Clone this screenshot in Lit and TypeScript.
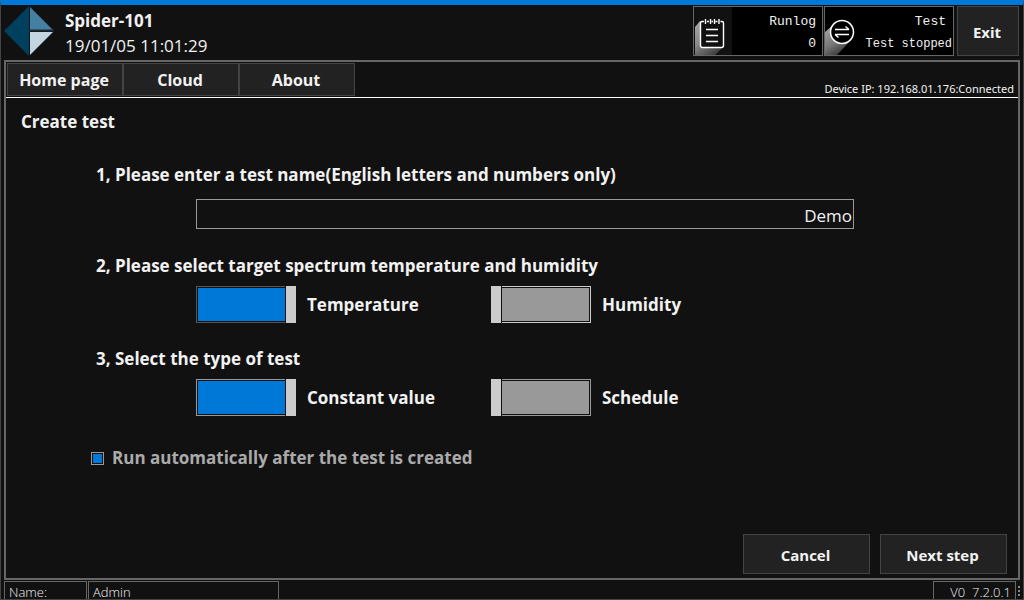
import { LitElement, html, css } from "lit";
import { customElement, property, state } from "lit/decorators.js";

@customElement("toggle-switch")
class ToggleSwitch extends LitElement {
  @property() label = "";
  @property() tone = "mid";
  @property({ type: Boolean }) on = false;

  static styles = css`
    :host {
      display: block;
    }
    .row {
      display: flex;
      align-items: center;
      gap: 11px;
      font-size: 17px;
      line-height: 24px;
      font-weight: 700;
    }
    .switch {
      appearance: none;
      position: relative;
      box-sizing: border-box;
      flex: none;
      width: 100px;
      height: 37px;
      margin: 0;
      padding: 1px;
      border: 1px solid #999;
      background: #999 content-box;
    }
    .dim {
      border-color: #555;
    }
    .bright {
      border-color: #ccc;
    }
    .switch:checked {
      background-color: #0078d7;
    }
    .switch::after {
      content: "";
      position: absolute;
      top: -1px;
      bottom: -1px;
      left: -1px;
      width: 10px;
      background: #ccc;
      box-shadow: 0 0 0 1px #111;
      clip-path: inset(0 -1px);
    }
    .switch:checked::after {
      left: auto;
      right: -1px;
    }
  `;

  render() {
    return html`<label class="row">
      <input
        class="switch ${this.tone}"
        type="checkbox"
        role="switch"
        .checked=${this.on}
        @change=${(e: Event) => (this.on = (e.target as HTMLInputElement).checked)}
      />
      <span>${this.label}</span>
    </label>`;
  }
}

@customElement("app-root")
class AppRoot extends LitElement {
  @state() private testName = "Demo";

  static styles = css`
    :host {
      display: flex;
      flex-direction: column;
      box-sizing: border-box;
      min-height: 100vh;
      border: 1px solid #444;
      border-top: 5px solid #0078d7;
      background: #111;
      color: #f2f2f2;
      font-family: "Open Sans", "Noto Sans", sans-serif;
    }
    .header {
      display: flex;
      justify-content: space-between;
      padding: 1px 4px 2px 3px;
    }
    .brand {
      display: flex;
      gap: 11px;
    }
    .brand-text {
      padding-top: 2px;
    }
    .logo {
      width: 50px;
      height: 50px;
    }
    .device {
      margin: 0;
      font-size: 17px;
      line-height: 25px;
      font-weight: 700;
    }
    .clock {
      display: block;
      font-size: 17px;
      line-height: 25px;
    }
    .tools {
      display: flex;
    }
    .panel {
      display: flex;
      box-sizing: border-box;
      width: 130px;
      height: 50px;
      margin: 0 1px 0 0;
      padding: 0;
      border: 1px solid #666;
      background: #000;
      color: #f2f2f2;
      font-family: "Liberation Mono", monospace;
      text-align: right;
    }
    .panel-icon {
      flex: none;
      width: 38px;
      height: 48px;
    }
    .panel-text {
      flex: 1;
      padding: 4px 6px 0 0;
      font-size: 13px;
      line-height: 22px;
    }
    .panel-text.tight {
      padding: 4px 1px 0 0;
      font-size: 12px;
    }
    .panel-text span {
      display: block;
      white-space: nowrap;
    }
    .panel-text .name {
      font-size: 13px;
    }
    .tight .name {
      padding-right: 6px;
    }
    .btn {
      box-sizing: border-box;
      border: 1px solid #444;
      background: #222;
      color: #f2f2f2;
      font-family: inherit;
      font-size: 15px;
      line-height: 20px;
      font-weight: 700;
      padding: 2px 2px 0 0;
    }
    .exit {
      width: 62px;
      height: 50px;
      margin-left: 2px;
    }
    .frame {
      display: flex;
      flex: 1;
      flex-direction: column;
      margin: 0 3px;
      border: 2px solid #666;
    }
    .bar {
      display: flex;
      justify-content: space-between;
      align-items: flex-end;
      padding: 1px 0 1px 1px;
      border-bottom: 1px solid #fff;
    }
    .tabs {
      display: flex;
    }
    .tab {
      display: block;
      box-sizing: border-box;
      width: 116px;
      padding: 2px 2px 0 0;
      border: 1px solid #444;
      background: #222;
      color: #f2f2f2;
      font-size: 16px;
      line-height: 29px;
      font-weight: 700;
      text-align: center;
      text-decoration: none;
    }
    .ip {
      padding-right: 4px;
      font-family: "Noto Sans", sans-serif;
      font-size: 11px;
      line-height: 14px;
    }
    .form {
      display: flex;
      flex: 1;
      flex-direction: column;
      padding: 12px 11px 4px 15px;
    }
    .title,
    .step {
      margin: 0;
      font-size: 17px;
      line-height: 24px;
      font-weight: 700;
    }
    .title {
      margin-bottom: 29px;
    }
    .step {
      display: block;
      margin-left: 75px;
    }
    .name-box {
      box-sizing: border-box;
      height: 30px;
      margin: 12px 153px 25px 175px;
      padding: 2px 1px 0;
      border: 1px solid #999;
      border-radius: 0;
      background: #111;
      color: #f2f2f2;
      font-family: inherit;
      font-size: 17px;
      text-align: right;
    }
    .group {
      margin: 0;
      padding: 0;
      border: 0;
      min-width: 0;
    }
    .step.legend {
      padding: 0;
    }
    .switches {
      display: grid;
      grid-template-columns: 295px 1fr;
      padding: 8px 0 24px 175px;
    }
    .auto {
      display: flex;
      align-items: center;
      align-self: flex-start;
      gap: 8px;
      margin: 6px 0 0 70px;
      color: #aaa;
      font-size: 17px;
      line-height: 24px;
      font-weight: 700;
    }
    .tick {
      appearance: none;
      box-sizing: border-box;
      width: 13px;
      height: 13px;
      margin: 0;
      padding: 1px;
      border: 1px solid #999;
    }
    .tick:checked {
      background: #0078d7 content-box;
    }
    .actions {
      display: flex;
      justify-content: flex-end;
      gap: 10px;
      margin-top: auto;
    }
    .action {
      width: 127px;
      height: 40px;
    }
    .status {
      display: flex;
      gap: 1px;
      padding: 1px 2px 0 3px;
      font-family: "Open Sans", sans-serif;
      font-size: 13px;
      font-weight: 300;
    }
    .cell {
      box-sizing: border-box;
      border: 1px solid #666;
      border-bottom: 0;
      padding: 1px 4px 0;
      height: 18px;
      line-height: 18px;
      white-space: pre;
    }
    .who {
      width: 83px;
    }
    .user {
      width: 191px;
    }
    .version {
      width: 83px;
      margin-left: auto;
      text-align: right;
    }
    .grip {
      width: 4px;
      height: 18px;
    }
  `;

  render() {
    return html`
      <header class="header">
        <div class="brand">
          <svg class="logo" viewBox="0 0 50 50" aria-hidden="true">
            <path d="M25 0V50L0 25Z" fill="#00405f" />
            <path d="M26 1L49 24H26Z" fill="#4580a3" />
            <path d="M26 26H49L26 49Z" fill="#c3d5e1" />
            <path d="M25 24.5H50" stroke="#1d2a33" stroke-width="2" />
          </svg>
          <div class="brand-text">
            <h1 class="device">Spider-101</h1>
            <time class="clock">19/01/05 11:01:29</time>
          </div>
        </div>
        <div class="tools">
          <button class="panel" type="button">
            <svg class="panel-icon" viewBox="0 0 38 48" aria-hidden="true">
              <defs>
                <linearGradient id="g1" x1="0" y1="0" x2="0.6" y2="1">
                  <stop offset="0" stop-color="#aaa" />
                  <stop offset="0.55" stop-color="#888" />
                  <stop offset="1" stop-color="#444" />
                </linearGradient>
              </defs>
              <rect width="38" height="48" fill="#111" />
              <path d="M6 14L1 20V48H21L29 40Z" fill="url(#g1)" />
              <rect x="6" y="14" width="23" height="27" rx="2" fill="#111" />
              <path
                d="M10 14.5H8Q6.500 14.500 6.500 16V38.500Q6.500 40.500 8.500 40.500H27.500Q29.500 40.500 29.500 38.500V16Q29.500 14.500 28 14.500H26.500M13 14.500H15M17.500 14.500H19M21.500 14.500H23.500M11.500 12V17M16.500 12V17M20.500 12V17M25 12V17M12 22.500H24M12 28.500H24M12 34.500H24"
                fill="none"
                stroke="#fff"
                stroke-width="1.400"
              />
            </svg>
            <span class="panel-text"><span class="name">Runlog</span><span>0</span></span>
          </button>
          <button class="panel" type="button">
            <svg class="panel-icon" viewBox="0 0 38 48" aria-hidden="true">
              <defs>
                <linearGradient id="g2" x1="0.200" y1="0.200" x2="0.600" y2="1">
                  <stop offset="0" stop-color="#999" />
                  <stop offset="0.500" stop-color="#777" />
                  <stop offset="1" stop-color="#333" />
                </linearGradient>
              </defs>
              <path d="M9 17L0 25V48H12L27 32Z" fill="url(#g2)" />
              <circle cx="17" cy="25" r="11.500" fill="#000" stroke="#fff" stroke-width="1.500" />
              <path
                d="M10 22.500H24M20.500 19.500L24 22.500M24 27.500H10M13.500 30.500L10 27.500"
                fill="none"
                stroke="#fff"
                stroke-width="1.400"
              />
            </svg>
            <span class="panel-text tight"><span class="name">Test</span><span>Test stopped</span></span>
          </button>
          <button class="btn exit" type="button">Exit</button>
        </div>
      </header>

      <main class="frame">
        <div class="bar">
          <nav class="tabs">
            <a class="tab" href="#home">Home page</a>
            <a class="tab" href="#cloud">Cloud</a>
            <a class="tab" href="#about">About</a>
          </nav>
          <span class="ip">Device IP: 192.168.01.176:Connected</span>
        </div>
        <form class="form" @submit=${(e: Event) => e.preventDefault()}>
          <h2 class="title">Create test</h2>
          <label class="step" for="test-name">1, Please enter a test name(English letters and numbers only)</label>
          <input
            class="name-box"
            id="test-name"
            type="text"
            .value=${this.testName}
            @input=${(e: Event) => (this.testName = (e.target as HTMLInputElement).value)}
          />
          <fieldset class="group">
            <legend class="step legend">2, Please select target spectrum temperature and humidity</legend>
            <div class="switches">
              <toggle-switch label="Temperature" tone="dim" on></toggle-switch>
              <toggle-switch label="Humidity" tone="bright"></toggle-switch>
            </div>
          </fieldset>
          <fieldset class="group">
            <legend class="step legend">3, Select the type of test</legend>
            <div class="switches">
              <toggle-switch label="Constant value" on></toggle-switch>
              <toggle-switch label="Schedule"></toggle-switch>
            </div>
          </fieldset>
          <label class="auto">
            <input class="tick" type="checkbox" checked />
            <span>Run automatically after the test is created</span>
          </label>
          <div class="actions">
            <button class="btn action" type="button">Cancel</button>
            <button class="btn action" type="submit">Next step</button>
          </div>
        </form>
      </main>

      <footer class="status">
        <span class="cell who">Name:</span>
        <span class="cell user">Admin</span>
        <span class="cell version">V0  7.2.0.1</span>
        <svg class="grip" viewBox="0 0 4 18" aria-hidden="true">
          <path d="M1 5h2v2h-2zM1 9h2v2h-2zM1 13h2v2h-2z" fill="#888" />
        </svg>
      </footer>
    `;
  }
}
